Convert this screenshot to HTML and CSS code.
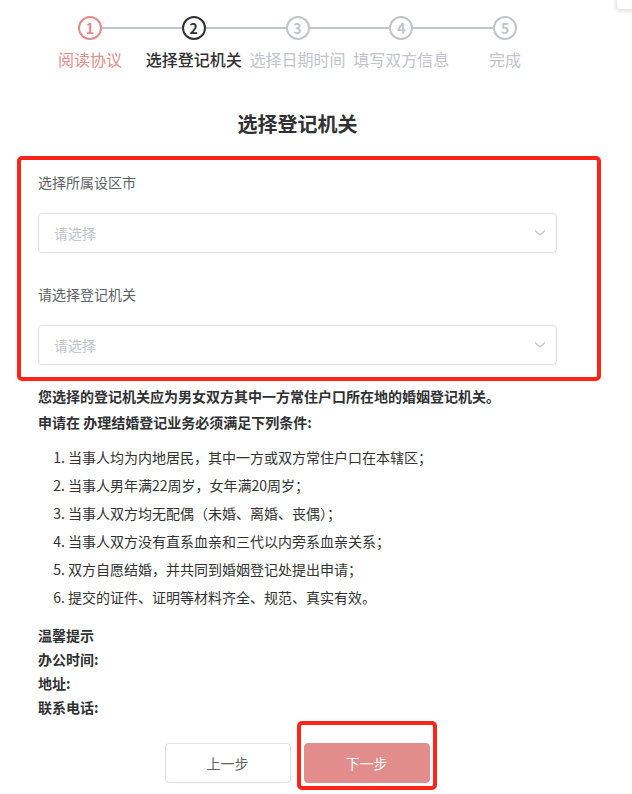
FILE: index.html
```html
<!DOCTYPE html>
<html lang="zh-CN">
<head>
<meta charset="utf-8">
<title>选择登记机关</title>
<link rel="stylesheet" href="styles.css">
</head>
<body>
<div class="corner-pop"></div>
<div class="page">
  <div class="steps">
    <div class="step done first">
      <div class="step-head"><span class="bar"></span><span class="circle">1</span><span class="bar"></span></div>
      <div class="step-title">阅读协议</div>
    </div>
    <div class="step active">
      <div class="step-head"><span class="bar"></span><span class="circle">2</span><span class="bar"></span></div>
      <div class="step-title">选择登记机关</div>
    </div>
    <div class="step">
      <div class="step-head"><span class="bar"></span><span class="circle">3</span><span class="bar"></span></div>
      <div class="step-title">选择日期时间</div>
    </div>
    <div class="step">
      <div class="step-head"><span class="bar"></span><span class="circle">4</span><span class="bar"></span></div>
      <div class="step-title">填写双方信息</div>
    </div>
    <div class="step last">
      <div class="step-head"><span class="bar"></span><span class="circle">5</span><span class="bar"></span></div>
      <div class="step-title">完成</div>
    </div>
  </div>

  <h2 class="title">选择登记机关</h2>

  <div class="form-box">
    <div class="form-label">选择所属设区市</div>
    <div class="select">
      <span class="placeholder">请选择</span>
      <svg class="arrow" width="12" height="8" viewBox="0 0 12 8"><path d="M1 1.5 L6 6 L11 1.5" fill="none" stroke="#c0c4cc" stroke-width="1.2"/></svg>
    </div>
    <div class="form-label second">请选择登记机关</div>
    <div class="select">
      <span class="placeholder">请选择</span>
      <svg class="arrow" width="12" height="8" viewBox="0 0 12 8"><path d="M1 1.5 L6 6 L11 1.5" fill="none" stroke="#c0c4cc" stroke-width="1.2"/></svg>
    </div>
  </div>

  <p class="strong first-note">您选择的登记机关应为男女双方其中一方常住户口所在地的婚姻登记机关。</p>
  <p class="strong">申请在 办理结婚登记业务必须满足下列条件:</p>

  <ol class="conditions">
    <li>当事人均为内地居民，其中一方或双方常住户口在本辖区；</li>
    <li>当事人男年满22周岁，女年满20周岁；</li>
    <li>当事人双方均无配偶（未婚、离婚、丧偶）；</li>
    <li>当事人双方没有直系血亲和三代以内旁系血亲关系；</li>
    <li>双方自愿结婚，并共同到婚姻登记处提出申请；</li>
    <li>提交的证件、证明等材料齐全、规范、真实有效。</li>
  </ol>

  <div class="tips">
    <div>温馨提示</div>
    <div>办公时间:</div>
    <div>地址:</div>
    <div>联系电话:</div>
  </div>

  <div class="actions">
    <button class="btn btn-prev">上一步</button>
    <div class="mark-box">
      <button class="btn btn-next">下一步</button>
    </div>
  </div>
</div>
</body>
</html>
```
FILE: styles.css
```css
* { box-sizing: border-box; }
html, body { margin: 0; padding: 0; background: #fff; }
body {
  font-family: "Noto Sans CJK SC", "Noto Sans", "Liberation Sans", sans-serif;
  color: #303133;
  font-size: 14px;
  overflow: hidden;
}
.corner-pop {
  position: absolute;
  right: -6px;
  top: -6px;
  width: 22px;
  height: 16px;
  background: #fff;
  border: 1px solid #e4e7ed;
  border-radius: 4px;
  box-shadow: 0 1px 4px rgba(0,0,0,0.15);
}
.page {
  width: 519px;
  margin-left: 38px;
  padding-top: 16px;
}
.steps { display: flex; }
.step { flex: 1; display: flex; flex-direction: column; align-items: center; }
.step-head { display: flex; align-items: center; width: 100%; height: 24px; }
.bar { flex: 1; height: 2px; background: #c0c4cc; }
.first .bar:first-child, .last .bar:last-child { background: transparent; }
.circle {
  width: 24px; height: 24px;
  border: 2px solid #c0c4cc;
  border-radius: 50%;
  display: flex; align-items: center; justify-content: center;
  font-size: 14px; font-weight: 700; line-height: 1;
  color: #c0c4cc;
}
.step-title {
  margin-top: 8px;
  font-size: 16px;
  line-height: 22px;
  color: #c0c4cc;
  white-space: nowrap;
}
.done .circle { border-color: #e38c8c; color: #e38c8c; }
.done .step-title { color: #e38c8c; }
.active .circle { border-color: #303133; color: #303133; }
.active .step-title { color: #303133; font-weight: 500; }

.title {
  margin: 40px 0 0;
  text-align: center;
  font-size: 20px;
  line-height: 28px;
  font-weight: 700;
  color: #303133;
}
.form-box {
  margin: 18px -44px 0 -21px;
  padding: 12px 40px 12px 17px;
  border: 4px solid #fe2418;
  border-radius: 5px;
}
.form-label {
  font-size: 14px;
  line-height: 20px;
  color: #606266;
  margin-bottom: 21px;
}
.form-label.second { margin-top: 31px; }
.select {
  height: 40px;
  border: 1px solid #dcdfe6;
  border-radius: 4px;
  display: flex;
  align-items: center;
  justify-content: space-between;
  padding: 0 10px 0 15px;
}
.placeholder { color: #c0c4cc; font-size: 14px; line-height: 20px; }
.arrow { display: block; }

p { margin: 0; }
.strong { font-weight: 700; line-height: 20px; color: #303133; }
.first-note { margin-top: 5px; }
.strong + .strong { margin-top: 6px; }
.conditions {
  margin: 15px 0 0;
  padding-left: 30px;
  color: #333;
}
.conditions li { line-height: 20px; margin-bottom: 8px; }
.tips { margin-top: 18px; font-weight: 700; color: #303133; }
.tips div { line-height: 20px; margin-bottom: 4px; }

.actions {
  display: flex;
  justify-content: center;
  align-items: flex-end;
  gap: 6px;
  margin-top: 2px;
  margin-left: 6px;
}
.mark-box {
  border: 4px solid #fe2418;
  border-radius: 5px;
  padding: 18px 3px 3px 3px;
}
.btn {
  width: 126px;
  height: 40px;
  border-radius: 4px;
  font-family: inherit;
  font-size: 14px;
  cursor: pointer;
}
.btn-prev { background: #fff; border: 1px solid #dcdfe6; color: #606266; margin-bottom: 7px; }
.btn-next { background: #e38c8c; border: 1px solid #e38c8c; color: #fff; display: block; }
```
